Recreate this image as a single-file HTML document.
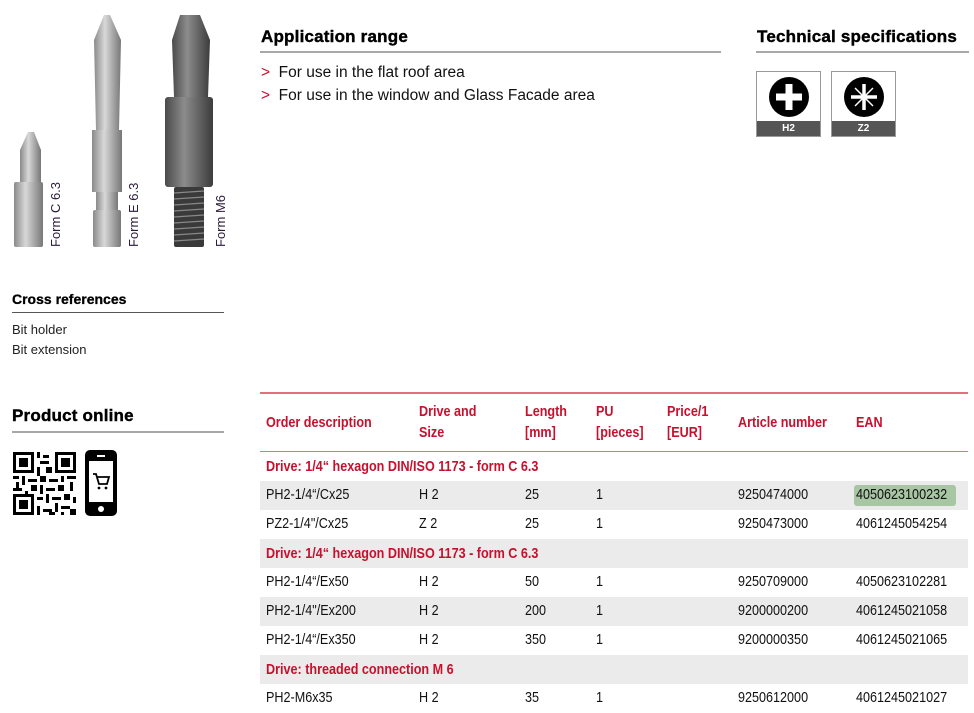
<!DOCTYPE html>
<html><head><meta charset="utf-8"><style>
*{margin:0;padding:0;box-sizing:border-box}
body{width:974px;height:710px;background:#fff;position:relative;overflow:hidden;font-family:"Liberation Sans",Arial,sans-serif;color:#111}
.a{position:absolute;white-space:nowrap}
.h{font-weight:bold;font-size:17px;color:#000;letter-spacing:.2px;-webkit-text-stroke:.4px #000}
.line{position:absolute;height:2px;background:#a8a8a8}
.c{display:inline-block;transform:scaleX(.84);transform-origin:left center}
.red{color:#c8102e}
.t{font-size:15px}
.th{font-size:15px;font-weight:bold;color:#c8102e;line-height:21px}
.row{position:absolute;left:260px;width:708px;height:29px}
.g{background:#ebebeb}
.sm{font-size:13px;color:#222}
</style></head><body>

<svg class="a" style="left:0;top:0" width="250" height="260">
<defs>
<linearGradient id="m" x1="0" x2="1"><stop offset="0" stop-color="#8a8a8a"/><stop offset=".4" stop-color="#d8d8d8"/><stop offset="1" stop-color="#777"/></linearGradient>
<linearGradient id="d" x1="0" x2="1"><stop offset="0" stop-color="#4a4a4a"/><stop offset=".4" stop-color="#8c8c8c"/><stop offset="1" stop-color="#3c3c3c"/></linearGradient>
</defs>
<path d="M20,150 L28,132 L34,132 L41,150 L41,182 L20,182Z" fill="url(#m)"/>
<rect x="14" y="182" width="29" height="65" rx="2" fill="url(#m)"/>
<path d="M94,40 L104,15 L110,15 L121,40 L119,130 L96,130Z" fill="url(#m)"/>
<rect x="92" y="130" width="30" height="62" fill="url(#m)"/>
<rect x="96" y="192" width="22" height="18" fill="url(#m)"/>
<rect x="93" y="210" width="28" height="37" rx="2" fill="url(#m)"/>
<path d="M172,40 L180,15 L200,15 L210,40 L208,97 L174,97Z" fill="url(#d)"/>
<rect x="165" y="97" width="48" height="90" rx="3" fill="url(#d)"/>
<rect x="174" y="187" width="30" height="60" rx="2" fill="#3a3a3a"/>
<g stroke="#888" stroke-width="1.2">
<line x1="174" y1="193" x2="204" y2="191"/><line x1="174" y1="199" x2="204" y2="197"/><line x1="174" y1="205" x2="204" y2="203"/><line x1="174" y1="211" x2="204" y2="209"/><line x1="174" y1="217" x2="204" y2="215"/><line x1="174" y1="223" x2="204" y2="221"/><line x1="174" y1="229" x2="204" y2="227"/><line x1="174" y1="235" x2="204" y2="233"/><line x1="174" y1="241" x2="204" y2="239"/></g>
<g font-family="Liberation Sans,Arial,sans-serif" font-size="13" fill="#2a1a3a">
<text transform="translate(60,247) rotate(-90)">Form C 6.3</text>
<text transform="translate(138,247) rotate(-90)">Form E 6.3</text>
<text transform="translate(225,247) rotate(-90)">Form M6</text>
</g>
</svg>

<div class="a h" style="left:261px;top:27px">Application range</div>
<div class="line" style="left:260px;top:51px;width:461px"></div>
<div class="a" style="left:261px;top:61px;font-size:15.5px;line-height:23px"><span class="red">&gt;</span>&nbsp; For use in the flat roof area<br><span class="red">&gt;</span>&nbsp; For use in the window and Glass Facade area</div>

<div class="a h" style="left:757px;top:27px">Technical specifications</div>
<div class="line" style="left:756px;top:51px;width:213px"></div>

<div class="a" style="left:756px;top:71px;width:65px;height:66px;border:1px solid #999">
<svg width="63" height="50"><circle cx="32" cy="25" r="20" fill="#000"/><rect x="28.5" y="12" width="7" height="26" fill="#fff"/><rect x="19" y="21.5" width="26" height="7" fill="#fff"/></svg>
<div style="position:absolute;left:0;right:0;bottom:0;height:15px;background:#555;color:#fff;font-size:10px;font-weight:bold;text-align:center;line-height:15px">H2</div></div>
<div class="a" style="left:831px;top:71px;width:65px;height:66px;border:1px solid #999">
<svg width="63" height="50"><circle cx="32" cy="25" r="20" fill="#000"/><g stroke="#fff" stroke-width="3.5"><line x1="32" y1="12" x2="32" y2="38"/><line x1="19" y1="25" x2="45" y2="25"/></g><g stroke="#fff" stroke-width="1.5"><line x1="23" y1="16" x2="41" y2="34"/><line x1="41" y1="16" x2="23" y2="34"/></g></svg>
<div style="position:absolute;left:0;right:0;bottom:0;height:15px;background:#555;color:#fff;font-size:10px;font-weight:bold;text-align:center;line-height:15px">Z2</div></div>

<div class="a" style="left:12px;top:291px;font-size:14px;font-weight:bold;color:#000;-webkit-text-stroke:.3px #000">Cross references</div>
<div class="a" style="left:12px;top:312px;width:212px;height:1px;background:#555"></div>
<div class="a sm" style="left:12px;top:320px;line-height:20px">Bit holder<br>Bit extension</div>

<div class="a h" style="left:12px;top:406px;font-size:17px">Product online</div>
<div class="line" style="left:12px;top:431px;width:212px"></div>

<svg class="a" style="left:13px;top:452px" width="63" height="63" viewBox="0 0 21 21" shape-rendering="crispEdges">
<g fill="#000">
<path d="M0 0h7v7h-7zM1 1v5h5v-5zM2 2h3v3h-3z" fill-rule="evenodd"/>
<path d="M14 0h7v7h-7zM15 1v5h5v-5zM16 2h3v3h-3z" fill-rule="evenodd"/>
<path d="M0 14h7v7h-7zM1 15v5h5v-5zM2 16h3v3h-3z" fill-rule="evenodd"/>
<rect x="8" y="0" width="1" height="2"/><rect x="10" y="1" width="2" height="1"/><rect x="9" y="3" width="3" height="1"/><rect x="8" y="5" width="1" height="3"/><rect x="11" y="5" width="2" height="2"/>
<rect x="0" y="8" width="2" height="1"/><rect x="3" y="8" width="1" height="3"/><rect x="5" y="9" width="3" height="1"/><rect x="1" y="10" width="1" height="2"/><rect x="9" y="8" width="2" height="2"/><rect x="12" y="9" width="3" height="1"/><rect x="16" y="8" width="1" height="2"/><rect x="18" y="8" width="3" height="1"/><rect x="19" y="10" width="1" height="3"/>
<rect x="6" y="11" width="2" height="2"/><rect x="9" y="11" width="1" height="3"/><rect x="11" y="12" width="3" height="1"/><rect x="15" y="11" width="2" height="2"/><rect x="0" y="12" width="3" height="1"/><rect x="4" y="13" width="1" height="1"/>
<rect x="8" y="15" width="2" height="1"/><rect x="11" y="14" width="1" height="3"/><rect x="13" y="15" width="3" height="1"/><rect x="17" y="14" width="2" height="2"/><rect x="20" y="15" width="1" height="2"/>
<rect x="8" y="18" width="1" height="3"/><rect x="10" y="19" width="3" height="1"/><rect x="14" y="17" width="1" height="3"/><rect x="16" y="18" width="3" height="1"/><rect x="19" y="19" width="2" height="2"/><rect x="12" y="20" width="2" height="1"/><rect x="16" y="20" width="1" height="1"/>
</g></svg>
<svg class="a" style="left:85px;top:450px" width="32" height="66">
<rect x="0" y="0" width="32" height="66" rx="5" fill="#000"/><rect x="4" y="11" width="24" height="41" fill="#fff"/><rect x="12" y="5" width="8" height="2" fill="#fff"/><circle cx="16" cy="59" r="3" fill="#fff"/>
<path d="M8 24h3l3 10h8l2-7h-12" fill="none" stroke="#000" stroke-width="1.8"/><circle cx="14" cy="38" r="1.4"/><circle cx="21" cy="38" r="1.4"/></svg>

<div class="a" style="left:260px;top:392px;width:708px;height:2px;background:#e0707e"></div>
<div class="a th" style="left:266px;top:412px"><span class="c">Order description</span></div>
<div class="a th" style="left:419px;top:401px"><span class="c">Drive and<br>Size</span></div>
<div class="a th" style="left:525px;top:401px"><span class="c">Length<br>[mm]</span></div>
<div class="a th" style="left:596px;top:401px"><span class="c">PU<br>[pieces]</span></div>
<div class="a th" style="left:667px;top:401px"><span class="c">Price/1<br>[EUR]</span></div>
<div class="a th" style="left:738px;top:412px"><span class="c">Article number</span></div>
<div class="a th" style="left:856px;top:412px"><span class="c">EAN</span></div>
<div class="a" style="left:260px;top:451px;width:708px;height:1px;background:#e0707e"></div>

<div class="row" style="top:452px"></div>
<div class="row g" style="top:481px"></div>
<div class="row" style="top:510px"></div>
<div class="row g" style="top:539px"></div>
<div class="row" style="top:568px"></div>
<div class="row g" style="top:597px"></div>
<div class="row" style="top:626px"></div>
<div class="row g" style="top:655px"></div>
<div class="row" style="top:684px"></div>

<div class="a th" style="left:266px;top:456px"><span class="c">Drive: 1/4“ hexagon DIN/ISO 1173 - form C 6.3</span></div>
<div class="a th" style="left:266px;top:543px"><span class="c">Drive: 1/4“ hexagon DIN/ISO 1173 - form C 6.3</span></div>
<div class="a th" style="left:266px;top:659px"><span class="c">Drive: threaded connection M 6</span></div>

<div class="a" style="left:854px;top:485px;width:102px;height:21px;background:#a9c6a4;border-radius:3px"></div>

<div style="position:absolute;left:0;top:0;font-size:15px;line-height:20px">
<div class="a" style="left:266px;top:485px"><span class="c">PH2-1/4“/Cx25</span></div>
<div class="a" style="left:419px;top:485px"><span class="c">H 2</span></div>
<div class="a" style="left:525px;top:485px"><span class="c">25</span></div>
<div class="a" style="left:596px;top:485px"><span class="c">1</span></div>
<div class="a" style="left:738px;top:485px"><span class="c">9250474000</span></div>
<div class="a" style="left:856px;top:485px"><span class="c">4050623100232</span></div>

<div class="a" style="left:266px;top:514px"><span class="c">PZ2-1/4"/Cx25</span></div>
<div class="a" style="left:419px;top:514px"><span class="c">Z 2</span></div>
<div class="a" style="left:525px;top:514px"><span class="c">25</span></div>
<div class="a" style="left:596px;top:514px"><span class="c">1</span></div>
<div class="a" style="left:738px;top:514px"><span class="c">9250473000</span></div>
<div class="a" style="left:856px;top:514px"><span class="c">4061245054254</span></div>

<div class="a" style="left:266px;top:572px"><span class="c">PH2-1/4“/Ex50</span></div>
<div class="a" style="left:419px;top:572px"><span class="c">H 2</span></div>
<div class="a" style="left:525px;top:572px"><span class="c">50</span></div>
<div class="a" style="left:596px;top:572px"><span class="c">1</span></div>
<div class="a" style="left:738px;top:572px"><span class="c">9250709000</span></div>
<div class="a" style="left:856px;top:572px"><span class="c">4050623102281</span></div>

<div class="a" style="left:266px;top:601px"><span class="c">PH2-1/4"/Ex200</span></div>
<div class="a" style="left:419px;top:601px"><span class="c">H 2</span></div>
<div class="a" style="left:525px;top:601px"><span class="c">200</span></div>
<div class="a" style="left:596px;top:601px"><span class="c">1</span></div>
<div class="a" style="left:738px;top:601px"><span class="c">9200000200</span></div>
<div class="a" style="left:856px;top:601px"><span class="c">4061245021058</span></div>

<div class="a" style="left:266px;top:630px"><span class="c">PH2-1/4“/Ex350</span></div>
<div class="a" style="left:419px;top:630px"><span class="c">H 2</span></div>
<div class="a" style="left:525px;top:630px"><span class="c">350</span></div>
<div class="a" style="left:596px;top:630px"><span class="c">1</span></div>
<div class="a" style="left:738px;top:630px"><span class="c">9200000350</span></div>
<div class="a" style="left:856px;top:630px"><span class="c">4061245021065</span></div>

<div class="a" style="left:266px;top:688px"><span class="c">PH2-M6x35</span></div>
<div class="a" style="left:419px;top:688px"><span class="c">H 2</span></div>
<div class="a" style="left:525px;top:688px"><span class="c">35</span></div>
<div class="a" style="left:596px;top:688px"><span class="c">1</span></div>
<div class="a" style="left:738px;top:688px"><span class="c">9250612000</span></div>
<div class="a" style="left:856px;top:688px"><span class="c">4061245021027</span></div>
</div>
</body></html>
